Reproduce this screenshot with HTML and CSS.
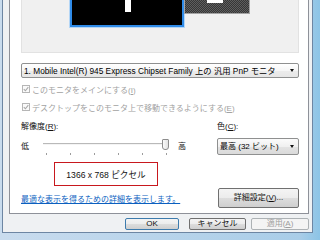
FILE: index.html
```html
<!DOCTYPE html>
<html lang="ja">
<head>
<meta charset="utf-8">
<link rel="stylesheet" href="styles.css">
</head>
<body>
<div class="frame">
  <div class="dialog">
    <div class="tab">
      <div class="preview">
        <div class="mon mon1"><span class="digit d1"></span></div>
        <div class="mon mon2"><span class="digit d2"></span></div>
      </div>
      <div class="select main-select"><span class="select-text">1. Mobile Intel(R) 945 Express Chipset Family 上の 汎用 PnP モニタ</span><span class="arrow"></span></div>
      <div class="check disabled"><span class="box"><svg width="6" height="6" viewBox="0 0 6 6"><path d="M0.8 3.2 L2.4 4.8 L5.3 1.2" fill="none" stroke="#a8a8a8" stroke-width="1.1"/></svg></span><span>このモニタをメインにする(<u>I</u>)</span></div>
      <div class="check disabled"><span class="box"><svg width="6" height="6" viewBox="0 0 6 6"><path d="M0.8 3.2 L2.4 4.8 L5.3 1.2" fill="none" stroke="#a8a8a8" stroke-width="1.1"/></svg></span><span>デスクトップをこのモニタ上で移動できるようにする(<u>E</u>)</span></div>
      <div class="settings">
        <div class="res-col">
          <div class="label">解像度(<u>R</u>):</div>
          <div class="slider-row">
            <span class="lo">低</span>
            <div class="slider">
              <div class="track"></div>
              <div class="ticks"><i></i><i></i><i></i><i></i><i></i><i></i></div>
              <div class="thumb"></div>
            </div>
            <span class="hi">高</span>
          </div>
          <div class="res-box">1366 x 768 ピクセル</div>
        </div>
        <div class="color-col">
          <div class="label">色(<u>C</u>):</div>
          <div class="select color-select"><span class="select-text">最高 (32 ビット)</span><span class="arrow"></span></div>
        </div>
      </div>
      <div class="link-row">
        <a class="link" href="#">最適な表示を得るための詳細を表示します。</a>
        <button class="btn adv">詳細設定(<u>V</u>)...</button>
      </div>
    </div>
    <div class="buttons">
      <button class="btn ok">OK</button>
      <button class="btn cancel">キャンセル</button>
      <button class="btn apply" disabled>適用(<u>A</u>)</button>
    </div>
  </div>
</div>
</body>
</html>
```
FILE: styles.css
```css
html, body {
  margin: 0;
  padding: 0;
  width: 320px;
  height: 240px;
  overflow: hidden;
  background: #bcd5ea;
}

.frame {
  box-sizing: border-box;
  width: 320px;
  height: 240px;
  padding: 0 7px 7px 2px;
  background: linear-gradient(90deg, #c9dcee 0, #c9dcee 2px, #a9cde8 300px, #8cc4e6 320px);
  font-family: "Liberation Sans", "Noto Sans CJK JP", sans-serif;
  font-size: 8px;
  color: #111;
}

.dialog {
  box-sizing: border-box;
  width: 311px;
  height: 233px;
  border: 1px solid #6d86a3;
  border-top: none;
  background: #eff1f3;
  padding: 0 3px 0 6px;
}

.tab {
  box-sizing: border-box;
  width: 300px;
  height: 214px;
  border: 1px solid #8e9199;
  border-top: none;
  background: #fff;
  padding: 0 9px 0 11px;
}

/* monitor preview */
.preview {
  position: relative;
  box-sizing: border-box;
  height: 53px;
  background: #f0f0f0;
  border: 1px solid #e2e2e2;
  border-top: none;
  overflow: hidden;
}

.mon {
  position: absolute;
  box-sizing: border-box;
  overflow: hidden;
}

.mon1 {
  left: 48px;
  bottom: 25px;
  width: 114px;
  height: 80px;
  background: #000;
  border: 2px solid #2f8be8;
  box-shadow: 0 0 0 1px #b4d6f6;
}

.mon2 {
  left: 162px;
  bottom: 38px;
  width: 66px;
  height: 60px;
  border: 1px solid #a3a3a3;
  background-color: #4a4a4a;
  background-image: repeating-conic-gradient(#363636 0 25%, #5e5e5e 0 50%);
  background-size: 2px 2px;
}

.digit {
  position: absolute;
  background: #fff;
}

.d1 {
  left: 53px;
  bottom: 13px;
  width: 6px;
  height: 40px;
}

.d2 {
  left: 22px;
  bottom: 10px;
  width: 16px;
  height: 3px;
}

/* selects */
.select {
  box-sizing: border-box;
  display: flex;
  align-items: center;
  border: 1px solid #8f9090;
  border-radius: 2px;
  background: linear-gradient(#fbfbfb 0, #f0f0f0 50%, #e3e3e3 51%, #dadada 100%);
  color: #000;
  white-space: nowrap;
  line-height: 10px;
}

.main-select {
  margin-top: 10px;
  height: 15px;
  padding: 0 3px 0 2px;
  font-size: 8.3px;
  background: linear-gradient(#ffffff 0, #f6f6f6 50%, #ececec 51%, #e6e6e6 100%);
}

.select-text {
  flex: 1;
  overflow: hidden;
}

.arrow {
  width: 0;
  height: 0;
  border-left: 2.5px solid transparent;
  border-right: 2.5px solid transparent;
  border-top: 3px solid #111;
  margin-right: 1px;
}

/* checkboxes */
.check {
  display: flex;
  align-items: center;
  height: 18px;
  white-space: nowrap;
}

.main-select + .check {
  margin-top: 2px;
}

.check.disabled {
  color: #a2a2a2;
}

.box {
  box-sizing: border-box;
  width: 8px;
  height: 8px;
  margin: 0 2px 0 1px;
  border: 1px solid #b6b6b6;
  background: #fafafa;
  display: flex;
  align-items: center;
  justify-content: center;
}

.box svg {
  display: block;
}

/* resolution & colour */
.settings {
  display: flex;
  justify-content: space-between;
  margin-top: 5px;
}

.label {
  height: 11px;
  line-height: 11px;
  white-space: nowrap;
}

.res-col {
  width: 165px;
}

.slider-row {
  display: flex;
  align-items: center;
  height: 19px;
  margin-top: 5px;
}

.lo, .hi {
  width: 8px;
  line-height: 10px;
}

.slider {
  position: relative;
  width: 125px;
  height: 19px;
  margin: 0 10px 0 14px;
}

.track {
  margin-top: 6px;
  height: 1px;
  background: #b9b9b9;
  border-bottom: 1px solid #f4f4f4;
}

.ticks {
  display: flex;
  justify-content: space-between;
  width: 121px;
  margin: 8px 0 0 3px;
}

.ticks i {
  width: 1px;
  height: 2px;
  background: #9c9c9c;
}

.thumb {
  position: absolute;
  left: 119px;
  top: 2px;
  width: 7px;
  height: 11px;
  box-sizing: border-box;
  border: 1px solid #8c8c8c;
  border-radius: 1px 1px 3px 3px;
  background: linear-gradient(90deg, #fafafa, #e2e2e2);
}

.res-box {
  box-sizing: border-box;
  width: 104px;
  height: 24px;
  margin: 6px 0 0 33px;
  border: 1px solid #c8181e;
  display: flex;
  align-items: center;
  justify-content: center;
  white-space: nowrap;
  font-size: 8.6px;
  color: #111;
}

.color-col {
  width: 82px;
}

.color-select {
  margin-top: 6px;
  height: 17px;
  padding: 0 3px 0 2px;
}

/* link row */
.link-row {
  display: flex;
  justify-content: space-between;
  align-items: center;
  margin-top: 2px;
}

.link {
  color: #0b5fbf;
  text-decoration: underline;
  white-space: nowrap;
  padding-top: 3px;
  line-height: 10px;
}

.btn {
  box-sizing: border-box;
  margin: 0;
  padding: 0;
  font: inherit;
  color: #111;
  border: 1px solid #707070;
  border-radius: 2px;
  background: linear-gradient(#f4f4f4 0, #ececec 50%, #dddddd 51%, #cfcfcf 100%);
  white-space: nowrap;
  line-height: 10px;
}

.adv {
  width: 81px;
  height: 20px;
}

/* dialog buttons */
.buttons {
  display: flex;
  justify-content: flex-end;
  padding-top: 4px;
}

.buttons .btn {
  height: 12px;
}

.ok {
  width: 54px;
  border-color: #3d7bad;
  margin-right: 10px;
}

.cancel {
  width: 57px;
  margin-right: 5px;
}

.apply {
  width: 58px;
  border-color: #adb2b5;
  background: #f4f4f4;
  color: #9d9d9d;
}
```
